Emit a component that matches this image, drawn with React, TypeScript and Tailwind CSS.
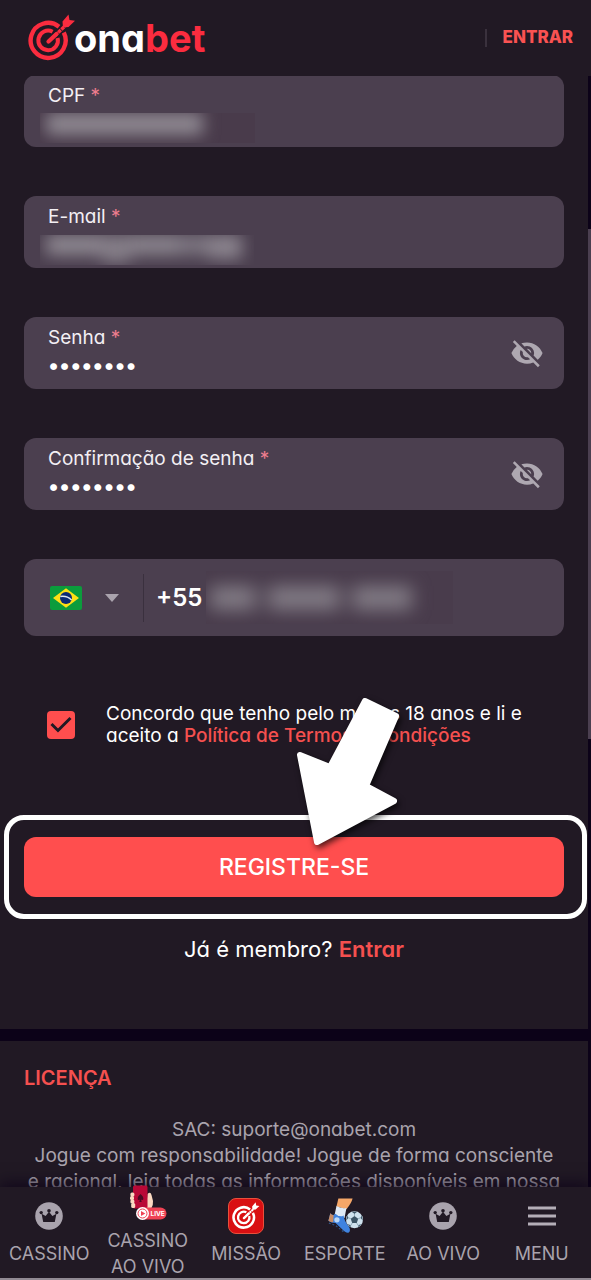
import React, { useState } from 'react';
import { MdVisibilityOff } from 'react-icons/md';

interface NavItem {
  id: string;
  label: string;
  icon: React.ReactNode;
}

// --- Drawings ---

const TargetLogo: React.FC<{ className?: string }> = ({ className }) => (
  <svg viewBox="0 0 48 48" fill="none" stroke="currentColor" className={className} aria-hidden="true">
    <path d="M31 12.700A17.500 17.500 0 1 0 35.800 18.600" strokeWidth="4.400" />
    <path d="M24.600 17.700A9.800 9.800 0 1 0 29.600 23.900" strokeWidth="4" />
    <path d="M20.500 27.500L28.500 20" strokeWidth="4.200" strokeLinecap="round" />
    <path d="M27 21.500L37 12" strokeWidth="3.400" strokeDasharray="3.600 0.800" />
    <path d="M34.500 7.500L40.500 0.500L41.500 6L47 6.800L40.500 13L35 13.400Z" fill="currentColor" stroke="none" />
  </svg>
);

const CrownIcon: React.FC = () => (
  <svg viewBox="0 0 28 28" className="size-7" aria-hidden="true">
    <circle cx="14" cy="14" r="13.8" fill="#a9a3ad" />
    <g fill="#211924">
      <path d="M6.600 11.800L10.600 14L14 9.800L17.400 14L21.400 11.800L19.800 20H8.200Z" />
      <circle cx="6.200" cy="10.600" r="1.700" />
      <circle cx="14" cy="8.800" r="1.800" />
      <circle cx="21.800" cy="10.600" r="1.700" />
    </g>
  </svg>
);

const LiveIcon: React.FC = () => (
  <svg viewBox="0 0 38 36" className="h-9 w-[38px]" aria-hidden="true">
    {/* hand behind the phone */}
    <path d="M17 23L18.500 9Q21.500 6 22.500 10L24 16Q24.500 20 22 24H17Z" fill="#fbd9c2" />
    <rect x="4" y="0.500" width="14.500" height="23" rx="1.500" fill="#b90937" />
    <g fill="#fbd9c2">
      <rect x="1.400" y="7.500" width="4" height="4" rx="1.500" />
      <rect x="1" y="11" width="4" height="4" rx="1.500" />
      <rect x="1.400" y="14.500" width="4" height="4" rx="1.500" />
      <rect x="2.200" y="18" width="4" height="5" rx="1.500" />
    </g>
    <path d="M11.500 9Q15 12 14.200 14.400Q13 15.600 12 14.600L12.700 17H10.300L11 14.600Q10 15.600 8.800 14.400Q8 12 11.500 9Z" fill="#4a0a22" />
    <rect x="8" y="22.500" width="29.500" height="12" rx="6" fill="#ef4355" />
    <circle cx="13.500" cy="28.500" r="6.500" fill="#fff" />
    <circle cx="13.500" cy="28.500" r="4.500" fill="none" stroke="#ef4355" strokeWidth="1" />
    <path d="M12 26L16.300 28.500L12 31Z" fill="#ef4355" />
    <text x="21.500" y="31" fontSize="6.500" fontWeight="700" fill="#fff">LIVE</text>
  </svg>
);

const MissionIcon: React.FC = () => (
  <span className="flex size-9 items-center justify-center rounded-lg border border-[#e8503c] bg-[#d90f12] text-white">
    <TargetLogo className="size-7" />
  </span>
);

const SportIcon: React.FC = () => (
  <svg viewBox="0 0 38 38" className="size-9" aria-hidden="true">
    <path d="M12 0.500H27Q26 5 20.500 12L10 9Z" fill="#f6a768" />
    <path d="M10 8.500Q15 11.500 20.500 10.500L18.500 21L8 18Z" fill="#dfeaf6" />
    <path d="M3.500 16Q6 19.500 9 16.500Q13 21 17.500 18.500Q18 24 23 30Q25.500 34 23 36.500Q20 37.500 16 33L9 26.500Q4 26.500 1.500 24Z" fill="#3f83e0" />
    <path d="M3.500 16Q5 18 7 18L6.500 25.500Q3 25.500 1.500 24Z" fill="#c98c63" />
    <circle cx="10.500" cy="23" r="2.800" fill="#b9d7f8" />
    <path d="M2 26.500L9 29L19 37" fill="none" stroke="#2f5587" strokeWidth="1.200" strokeDasharray="2 2" />
    <circle cx="29" cy="23" r="9" fill="#cfe2ee" />
    <path d="M29 19L32.900 21.900L31.400 26.500H26.600L25.100 21.900Z" fill="#3c5566" />
    <path d="M29 19V14.500M32.900 21.900L37.500 20M31.400 26.500L34 30.500M26.600 26.500L24 30.500M25.100 21.900L20.500 20" stroke="#8ba5b5" strokeWidth="1" />
    <path d="M26 14.500H32L29 16.500ZM36.500 18L37.900 24L35.700 21.500ZM21.500 18L20.100 24L22.300 21.500ZM33 31L36.500 27.500L33.500 28.500ZM25 31L21.500 27.500L24.500 28.500Z" fill="#3c5566" />
  </svg>
);

const MenuIcon: React.FC = () => (
  <svg viewBox="0 0 28 20" className="h-5 w-7" aria-hidden="true">
    <path d="M0 2H28M0 10H28M0 18H28" stroke="#b4aeb7" strokeWidth="2.800" />
  </svg>
);

const BrazilFlag: React.FC = () => (
  <svg viewBox="0 0 32 24" className="h-6 w-8" aria-hidden="true">
    <rect width="32" height="24" rx="2" fill="#0b9c3c" />
    <path d="M16 2.200L29 12L16 21.800L3 12Z" fill="#fee015" />
    <circle cx="16" cy="12" r="6" fill="#0b2b74" />
    <path d="M10.300 10.500Q17 9.500 21.600 14" fill="none" stroke="#dfe8f2" strokeWidth="1.400" />
  </svg>
);

const Pointer: React.FC = () => (
  <svg
    viewBox="0 0 110 156"
    className="pointer-events-none absolute bottom-[46px] left-1/2 z-10 h-[156px] w-[110px] drop-shadow-[2px_3px_3px_rgba(0,0,0,0.7)]"
    aria-hidden="true"
  >
    <path
      d="M71 6L102 21L72 91L100 106L23 147L6 60L36 72Z"
      fill="#fff"
      stroke="#fff"
      strokeWidth="6"
      strokeLinejoin="round"
    />
  </svg>
);

const NAV_ITEMS: NavItem[] = [
  { id: 'cassino', label: 'CASSINO', icon: <CrownIcon /> },
  { id: 'cassino-vivo', label: 'CASSINO AO VIVO', icon: <LiveIcon /> },
  { id: 'missao', label: 'MISSÃO', icon: <MissionIcon /> },
  { id: 'esporte', label: 'ESPORTE', icon: <SportIcon /> },
  { id: 'vivo', label: 'AO VIVO', icon: <CrownIcon /> },
  { id: 'menu', label: 'MENU', icon: <MenuIcon /> },
];

// --- Form parts ---

interface FieldProps {
  id: string;
  label: string;
  type?: string;
  defaultValue?: string;
  children?: React.ReactNode;
}

const Field: React.FC<FieldProps> = ({ id, label, type = 'text', defaultValue, children }) => (
  <div className="relative flex h-[72px] flex-col rounded-xl bg-[#4b3f4f] px-6 pt-[9px]">
    <label htmlFor={id} className="text-[19px] leading-6 text-[#f3eff4]">
      {label} <span className="text-[#ee7d8e]">*</span>
    </label>
    <input
      id={id}
      type={type}
      defaultValue={defaultValue}
      className="h-[30px] w-full bg-transparent text-[22px] font-semibold text-white outline-none"
    />
    {children}
  </div>
);

const PasswordField: React.FC<{ id: string; label: string }> = ({ id, label }) => {
  const [visible, setVisible] = useState(false);
  return (
    <Field id={id} label={label} type={visible ? 'text' : 'password'} defaultValue="onabet18">
      <button
        type="button"
        aria-label="Mostrar senha"
        onClick={() => setVisible(!visible)}
        className="absolute inset-y-0 right-5 flex items-center text-[#aea8b1]"
      >
        <MdVisibilityOff className="size-[34px]" />
      </button>
    </Field>
  );
};

const App: React.FC = () => {
  const [accepted, setAccepted] = useState(true);

  return (
    <div className="flex h-screen flex-col overflow-hidden bg-[#211924] font-['Inter','Open_Sans',sans-serif] text-white [font-feature-settings:'cv11']">
      {/* Header */}
      <header className="flex h-[76px] shrink-0 items-center justify-between pr-[18px] pl-7">
        <a href="#" className="flex items-center text-[#fb2c3f]" aria-label="onabet">
          <TargetLogo className="size-12" />
          <span className="-ml-0.5 text-[38px] leading-10 font-bold">
            <span className="text-white">ona</span>bet
          </span>
        </a>
        <div className="flex items-center gap-4">
          <span className="h-[18px] w-0.5 bg-[#3a313d]" />
          <a href="#entrar" className="text-[17px] font-extrabold text-[#fa5252]">ENTRAR</a>
        </div>
      </header>

      {/* Scroll area */}
      <div className="flex min-h-0 flex-1">
        <main className="min-w-0 flex-1 overflow-hidden bg-[#0c0218]">
          <form className="-mt-px bg-[#211924] px-6 pb-[66px]" onSubmit={(e) => e.preventDefault()}>
            <div className="flex flex-col gap-[49px]">
              <Field id="cpf" label="CPF">
                <div className="pointer-events-none absolute top-[38px] left-4 h-[30px] w-[215px] overflow-hidden bg-[#493b4b]">
                  <div className="ml-1.5 h-[22px] w-[157px] bg-[#8f8992] blur-[8px]" />
                </div>
              </Field>
              <Field id="email" label="E-mail">
                <div className="pointer-events-none absolute top-[39px] left-4 h-[30px] w-[214px] overflow-hidden">
                  <div className="ml-1.5 flex h-5 w-[196px] blur-[8px]">
                    <div className="h-5 w-[56px] bg-[#8f8992]" />
                    <div className="h-7 w-[28px] bg-[#857e88]" />
                    <div className="h-5 w-[48px] bg-[#8b858e]" />
                    <div className="h-5 w-[30px] bg-[#7d7681]" />
                    <div className="h-6 w-[34px] bg-[#8b848e]" />
                  </div>
                </div>
              </Field>
              <PasswordField id="senha" label="Senha" />
              <PasswordField id="confirmacao" label="Confirmação de senha" />

              {/* Phone */}
              <div className="flex h-[77px] items-center rounded-xl bg-[#4b3f4f] pl-[26px]">
                <div className="relative flex items-center gap-[23px] pr-6">
                  <BrazilFlag />
                  <svg viewBox="0 0 14 8" className="h-2 w-3.5" aria-hidden="true">
                    <path d="M0 0H14L7 8Z" fill="#aaa3ad" />
                  </svg>
                  <select aria-label="País" className="absolute inset-0 w-full opacity-0">
                    <option>Brasil</option>
                  </select>
                </div>
                <div className="h-12 w-px bg-[#3a303e]" />
                <label htmlFor="telefone" className="pl-3 text-2xl font-semibold">+55</label>
                <div className="relative ml-1 h-[53px] w-[247px] overflow-hidden bg-[#493c4c]">
                  <input id="telefone" type="tel" className="size-full bg-transparent outline-none" />
                  <div className="pointer-events-none absolute inset-0 flex items-center gap-3 pl-1 blur-[9px]">
                    <div className="h-6 w-[46px] bg-[#817a84]" />
                    <div className="h-6 w-[72px] bg-[#817a84]" />
                    <div className="h-6 w-[60px] bg-[#817a84]" />
                  </div>
                </div>
              </div>
            </div>

            {/* Terms */}
            <div className="mt-[67px] flex items-center gap-[31px] pl-[23px]">
              <span className="relative flex size-7 shrink-0">
                <input
                  id="termos"
                  type="checkbox"
                  checked={accepted}
                  onChange={(e) => setAccepted(e.target.checked)}
                  className="size-7 appearance-none rounded-sm bg-[#ff4e4e]"
                />
                {accepted && (
                  <svg viewBox="0 0 28 28" className="pointer-events-none absolute inset-0 size-7" aria-hidden="true">
                    <path d="M4.500 13L11 19.500L23.500 7" fill="none" stroke="#211924" strokeWidth="3" />
                  </svg>
                )}
              </span>
              <label htmlFor="termos" className="text-[19px] leading-[22px] whitespace-nowrap">
                Concordo que tenho pelo menos 18 anos e li e
                <br />
                aceito a <a href="#termos-condicoes" className="font-medium text-[#f5504f]">Política de Termos e Condições</a>
              </label>
            </div>

            {/* Submit */}
            <div className="relative mt-[90px]">
              <button type="submit" className="h-[60px] w-full rounded-xl bg-[#ff4e4e] text-[23px] font-medium">
                REGISTRE-SE
              </button>
              <div className="pointer-events-none absolute -inset-y-[22px] -right-[23px] -left-5 rounded-[20px] border-5 border-white" />
              <Pointer />
            </div>

            <p className="mt-[38px] text-center text-[22px] leading-7">
              Já é membro? <a href="#entrar" className="font-semibold text-[#f5504f]">Entrar</a>
            </p>
          </form>

          {/* Licence */}
          <section className="mt-3 bg-[#211924] px-6 pt-6">
            <h2 className="text-xl leading-[26px] font-semibold text-[#f5504f]">LICENÇA</h2>
            <p className="mt-[26px] text-center text-[19px] leading-[26px] whitespace-nowrap text-[#a9a3ad]">
              SAC: suporte@onabet.com
              <br />
              Jogue com responsabilidade! Jogue de forma consciente
              <br />
              e racional, leia todas as informações disponíveis em nossa
            </p>
          </section>
        </main>
        <div className="w-[3px] shrink-0 bg-[#0c0218] pt-[153px]">
          <div className="h-[510px] bg-[#4b3f50]" />
        </div>
      </div>

      {/* Bottom navigation */}
      <nav className="relative grid h-[93px] shrink-0 grid-cols-6 border-b-2 border-[#918a93] bg-[#211924] shadow-[0_-4px_14px_rgba(12,2,24,0.7)]">
        {NAV_ITEMS.map((item) => (
          <a
            key={item.id}
            href={`#${item.id}`}
            className="flex h-[91px] flex-col items-center justify-center gap-[7px] text-center text-lg leading-[26px] text-[#a9a3ad]"
          >
            <span className="flex h-9 shrink-0 items-center">{item.icon}</span>
            {item.label}
          </a>
        ))}
      </nav>
    </div>
  );
};

export default App;
